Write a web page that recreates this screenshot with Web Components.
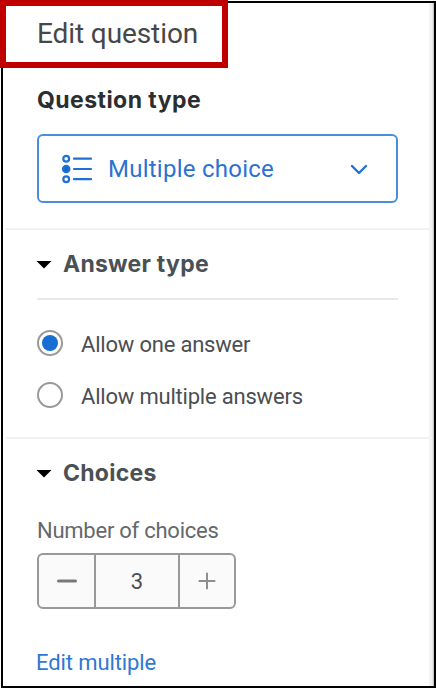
<!DOCTYPE html>
<html lang="en">
<head>
<meta charset="utf-8">
<title>Edit question</title>
<style>
  body {
    margin: 0;
    background: #fff;
    font-family: Roboto, "Noto Sans", sans-serif;
  }
</style>
</head>
<body>
<edit-panel>
  <panel-title slot="title">Edit question</panel-title>
  <question-type label="Question type">Multiple choice</question-type>
  <panel-section label="Answer type" lined>
    <radio-option checked>Allow one answer</radio-option>
    <radio-option>Allow multiple answers</radio-option>
  </panel-section>
  <panel-section label="Choices">
    <number-stepper label="Number of choices" value="3"></number-stepper>
    <text-link>Edit multiple</text-link>
  </panel-section>
</edit-panel>

<script>
class BaseElement extends HTMLElement {
  constructor() {
    super();
    this.attachShadow({ mode: "open" });
  }

  connectedCallback() {
    this.shadowRoot.innerHTML = this.render();
  }
}

customElements.define("edit-panel", class extends BaseElement {
  render() {
    return `
      <style>
        :host {
          display: grid;
          grid-template-columns: 1fr 5px;
          box-sizing: border-box;
          width: 435px;
          height: 687px;
          margin: 1px 0 0 1px;
          border: 2px solid #000;
          background: #fff;
        }
        main { padding-left: 3px; min-width: 0; }
        .gutter {
          background: linear-gradient(to right, #f3f3f3 40%, #e6e6e6 70%, #b5b5b5);
        }
      </style>
      <main>
        <slot name="title"></slot>
        <slot></slot>
      </main>
      <div class="gutter"></div>
    `;
  }
});

customElements.define("panel-title", class extends BaseElement {
  render() {
    return `
      <style>
        :host {
          display: block;
          height: 65px;
          padding-left: 31px;
          font-size: 28px;
          line-height: 62px;
          letter-spacing: -0.1px;
          color: #474747;
        }
        /* marker frame lies over the panel's own border */
        .marker {
          position: absolute;
          left: 0;
          top: 0;
          box-sizing: border-box;
          width: 228px;
          height: 68px;
          border: 6px solid #c00000;
        }
      </style>
      <slot></slot>
      <div class="marker"></div>
    `;
  }
});

customElements.define("question-type", class extends BaseElement {
  render() {
    return `
      <style>
        :host {
          display: block;
          box-sizing: border-box;
          height: 160px;
          padding: 16px 31px 0;
        }
        .label {
          height: 50px;
          font-family: Inter, sans-serif;
          font-size: 23px;
          font-weight: 700;
          line-height: 32px;
          letter-spacing: 0.45px;
          color: #2b2e31;
        }
        .select {
          display: flex;
          align-items: center;
          box-sizing: border-box;
          height: 69px;
          padding: 0 28px 0 23px;
          border: 2px solid #4a8edb;
          border-radius: 6px;
          font-size: 24px;
          letter-spacing: 0.25px;
          color: #2a73d2;
        }
        .text { flex: 1; margin-left: 15px; }
      </style>
      <div class="label">${this.getAttribute("label")}</div>
      <div class="select">
        <svg width="31" height="30" viewBox="0 0 31 30" fill="none" stroke="#1f71d1" stroke-width="2.2">
          <circle cx="4.2" cy="4.7" r="2.9"/>
          <circle cx="4.2" cy="15" r="3.2" fill="#0b68d0"/>
          <circle cx="4.2" cy="25.2" r="2.9"/>
          <path d="M12 4.7h17M12 15h17M12 25.2h17" stroke-linecap="round"/>
        </svg>
        <div class="text"><slot></slot></div>
        <svg width="18" height="12" viewBox="0 0 18 12" fill="none" stroke="#2172d2" stroke-width="2.4" stroke-linecap="round" stroke-linejoin="round">
          <path d="M2 3l7 7 7-7"/>
        </svg>
      </div>
    `;
  }
});

customElements.define("panel-section", class extends BaseElement {
  render() {
    return `
      <style>
        :host {
          display: block;
          border-top: 2px solid #f1f1f1;
          padding: 0 31px;
        }
        :host([lined]) { height: 207px; }
        .head {
          display: flex;
          align-items: center;
          height: 68px;
          gap: 11px;
          font-family: Inter, sans-serif;
          font-size: 23px;
          font-weight: 700;
          letter-spacing: 0.25px;
          color: #4b5055;
        }
        :host([lined]) .head { border-bottom: 2px solid #e8e8e8; }
        svg { margin-left: -1px; }
      </style>
      <div class="head">
        <svg width="16" height="9" viewBox="0 0 16 9"><path d="M.5 1h15L8 8.5z" fill="#000"/></svg>
        <span>${this.getAttribute("label")}</span>
      </div>
      <slot></slot>
    `;
  }
});

customElements.define("radio-option", class extends BaseElement {
  render() {
    return `
      <style>
        :host {
          display: flex;
          align-items: center;
          gap: 18px;
          height: 52px;
          font-size: 22px;
          letter-spacing: -0.2px;
          color: #4b4e52;
        }
        :host([checked]) { padding-top: 17px; }
        .ring {
          display: grid;
          place-items: center;
          box-sizing: border-box;
          width: 26px;
          height: 26px;
          border: 2px solid #999;
          border-radius: 50%;
        }
        :host([checked]) .ring::after {
          content: "";
          width: 16px;
          height: 16px;
          border-radius: 50%;
          background: #176ed3;
        }
        .text { padding-top: 2px; }
      </style>
      <span class="ring"></span>
      <span class="text"><slot></slot></span>
    `;
  }
});

customElements.define("number-stepper", class extends BaseElement {
  render() {
    return `
      <style>
        :host { display: block; }
        .label {
          height: 46px;
          font-size: 22px;
          line-height: 47px;
          letter-spacing: -0.25px;
          color: #64686c;
        }
        .box {
          display: grid;
          grid-template-columns: 55px 2px 82px 2px 1fr;
          place-items: center;
          box-sizing: border-box;
          width: 199px;
          height: 56px;
          border: 2px solid #999;
          border-radius: 6px;
          background: #fafafa;
          font-size: 22px;
          color: #4b4e52;
        }
        i { width: 2px; height: 100%; background: #999; }
      </style>
      <div class="label">${this.getAttribute("label")}</div>
      <div class="box">
        <svg width="20" height="20" viewBox="0 0 20 20"><path d="M1.5 10h17" stroke="#75797c" stroke-width="3" stroke-linecap="round"/></svg>
        <i></i>
        <span>${this.getAttribute("value")}</span>
        <i></i>
        <svg width="20" height="20" viewBox="0 0 20 20"><path d="M1.7 10h16.6M10 1.7v16.6" stroke="#8c8f91" stroke-width="2"/></svg>
      </div>
    `;
  }
});

customElements.define("text-link", class extends BaseElement {
  render() {
    return `
      <style>
        :host {
          display: block;
          margin: 32px 0 0 -1px;
          font-size: 22px;
          line-height: 44px;
          letter-spacing: -0.1px;
          color: #2f78d3;
        }
      </style>
      <slot></slot>
    `;
  }
});
</script>
</body>
</html>
